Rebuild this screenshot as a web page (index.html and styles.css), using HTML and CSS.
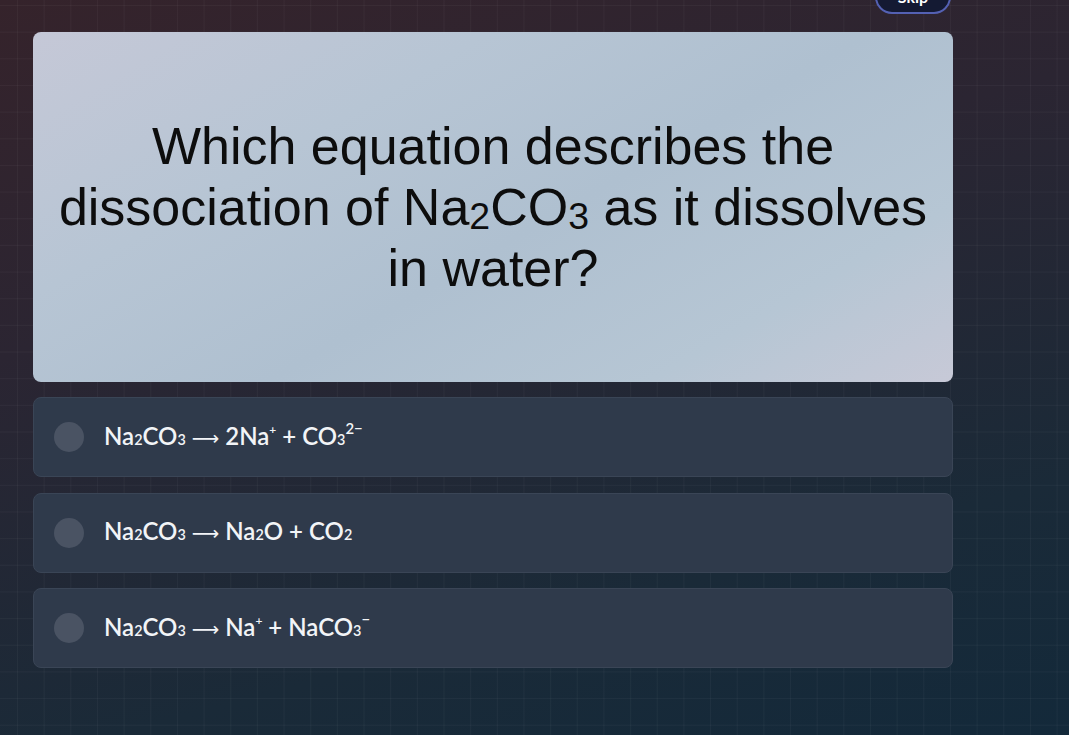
FILE: index.html
```html
<!DOCTYPE html>
<html lang="en">

<head>
    <meta charset="UTF-8">
    <meta name="viewport" content="width=device-width, initial-scale=1.0">
    <title>Chemistry Quiz</title>
    <link rel="stylesheet" href="styles.css">
</head>

<body>
    <div class="page">
        <!-- Top bar with skip button -->
        <div class="topbar">
            <button class="skip-btn">Skip</button>
        </div>

        <!-- Question card -->
        <div class="question-card">
            <h2 class="question-text">Which equation describes the dissociation of Na<span class="sub">2</span>CO<span class="sub">3</span> as it dissolves in water?</h2>
        </div>

        <!-- Answer options -->
        <div class="options">
            <div class="option">
                <span class="radio"></span>
                <span class="option-text">Na<span class="lo">2</span>CO<span class="lo">3</span> <span class="arrow">⟶</span> 2Na<span class="hi plus">+</span> + CO<span class="lo">3</span><span class="hi">2−</span></span>
            </div>
            <div class="option">
                <span class="radio"></span>
                <span class="option-text">Na<span class="lo">2</span>CO<span class="lo">3</span> <span class="arrow">⟶</span> Na<span class="lo">2</span>O + CO<span class="lo">2</span></span>
            </div>
            <div class="option">
                <span class="radio"></span>
                <span class="option-text">Na<span class="lo">2</span>CO<span class="lo">3</span> <span class="arrow">⟶</span> Na<span class="hi plus">+</span> + NaCO<span class="lo">3</span><span class="hi">−</span></span>
            </div>
        </div>
    </div>
</body>

</html>
```

FILE: styles.css
```css
/* Page background: dark gradient with a faint grid */
html, body {
    height: 100%;
}
body {
    margin: 0;
    padding: 0;
    overflow: hidden;
    font-family: Lato, "Noto Sans", sans-serif;
    background-color: #1c2733;
    background-image:
        linear-gradient(rgba(255, 255, 255, 0.035) 1px, transparent 1px),
        linear-gradient(90deg, rgba(255, 255, 255, 0.035) 1px, transparent 1px),
        linear-gradient(165deg, #35232b 0%, #2b2532 35%, #1a2a38 75%, #13293a 100%);
    background-size: 26.67px 26.67px, 26.67px 26.67px, 100% 100%;
    background-position: 17px 5px, 17px 5px, 0 0;
}
.page {
    width: 920px;
    padding-left: 33px;
}

/* Top bar - skip button sits mostly above the viewport */
.topbar {
    display: flex;
    justify-content: flex-end;
    height: 32px;
    padding-right: 2px;
}
.skip-btn {
    margin-top: -20px;
    height: 34px;
    width: 76px;
    border-radius: 17px;
    border: 2px solid #5461b3;
    background: #141a33;
    color: #fff;
    font-family: Lato, sans-serif;
    font-weight: 700;
    font-size: 16px;
    padding-top: 0;
    line-height: 16px;
}

/* Question card */
.question-card {
    height: 350px;
    border-radius: 8px;
    background: linear-gradient(150deg, #c5c8d7 0%, #b7c5d4 30%, #afc0d0 55%, #b6c6d4 80%, #c7c9d7 100%);
    display: flex;
    align-items: center;
    justify-content: center;
    box-sizing: border-box;
    padding: 0 20px;
}
.question-text {
    margin: 0;
    font-family: "Liberation Sans", Arial, sans-serif;
    font-weight: 400;
    font-size: 52px;
    line-height: 61px;
    color: #0d0d0d;
    text-align: center;
}
.question-text .sub {
    font-size: 0.72em;
    vertical-align: -0.12em;
    line-height: 0;
}

/* Answer options */
.options {
    display: flex;
    flex-direction: column;
    gap: 15.5px;
    margin-top: 15px;
}
.option {
    display: flex;
    align-items: center;
    height: 80px;
    box-sizing: border-box;
    padding-left: 20px;
    border: 1px solid #3a4556;
    border-radius: 8px;
    background: #2f3a4b;
}
.radio {
    width: 30px;
    height: 30px;
    border-radius: 50%;
    background: #4a5363;
    flex-shrink: 0;
}
.option-text {
    margin-left: 20px;
    color: #f2f4f7;
    font-size: 24px;
    font-weight: 600;
    line-height: 30px;
}
.option-text .lo {
    font-size: 0.6em;
    line-height: 0;
}
.option-text .hi {
    font-size: 0.62em;
    vertical-align: 0.75em;
    line-height: 0;
}
.option-text .hi.plus {
    font-size: 0.5em;
    vertical-align: 0.95em;
}
.option-text .arrow {
    font-family: "DejaVu Sans", sans-serif;
    font-weight: 400;
    font-size: 0.8em;
}
```
